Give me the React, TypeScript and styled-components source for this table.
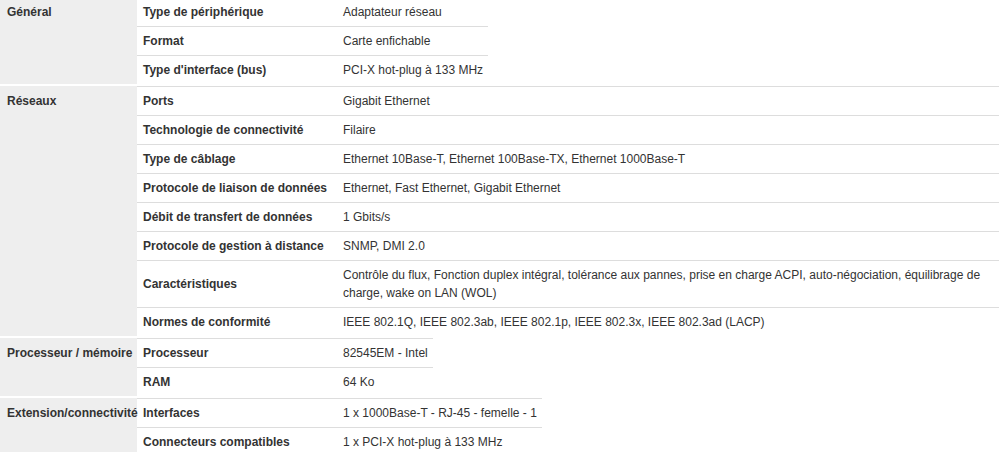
import React from "react";
import styled, { createGlobalStyle } from "styled-components";

const Global = createGlobalStyle`
  html, body { margin: 0; padding: 0; background: #fff; }
  body { font-family: "Liberation Sans", Arial, sans-serif; font-size: 12px; color: #333; }
`;

const Sheet = styled.div`
  width: 999px;
  margin-top: -3px;
  display: flex;
  flex-direction: column;
  align-items: flex-start;
  gap: 2px;
`;

const Group = styled.section`
  display: grid;
  grid-template-columns: 137px 200px auto;
  width: fit-content;
  max-width: 999px;
`;

const Category = styled.div<{ $rows: number }>`
  grid-column: 1;
  grid-row: 1 / span ${(p) => p.$rows};
  background: #eeeeee;
  font-weight: bold;
  line-height: 18px;
  padding: 6px 4px 0 7px;
  white-space: nowrap;
`;

const Label = styled.div`
  grid-column: 2;
  border-top: 1px solid #dddddd;
  font-weight: bold;
  line-height: 18px;
  padding: 5px 6px;
  display: flex;
  align-items: center;
`;

const Value = styled.div`
  grid-column: 3;
  border-top: 1px solid #dddddd;
  line-height: 18px;
  padding: 5px 5px 5px 6px;
  display: flex;
  align-items: center;
`;

type Spec = { category: string; rows: [string, string][] };

const data: Spec[] = [
  {
    category: "Général",
    rows: [
      ["Type de périphérique", "Adaptateur réseau"],
      ["Format", "Carte enfichable"],
      ["Type d'interface (bus)", "PCI-X hot-plug à 133 MHz"],
    ],
  },
  {
    category: "Réseaux",
    rows: [
      ["Ports", "Gigabit Ethernet"],
      ["Technologie de connectivité", "Filaire"],
      ["Type de câblage", "Ethernet 10Base-T, Ethernet 100Base-TX, Ethernet 1000Base-T"],
      ["Protocole de liaison de données", "Ethernet, Fast Ethernet, Gigabit Ethernet"],
      ["Débit de transfert de données", "1 Gbits/s"],
      ["Protocole de gestion à distance", "SNMP, DMI 2.0"],
      [
        "Caractéristiques",
        "Contrôle du flux, Fonction duplex intégral, tolérance aux pannes, prise en charge ACPI, auto-négociation, équilibrage de charge, wake on LAN (WOL)",
      ],
      ["Normes de conformité", "IEEE 802.1Q, IEEE 802.3ab, IEEE 802.1p, IEEE 802.3x, IEEE 802.3ad (LACP)"],
    ],
  },
  {
    category: "Processeur / mémoire",
    rows: [
      ["Processeur", "82545EM - Intel"],
      ["RAM", "64 Ko"],
    ],
  },
  {
    category: "Extension/connectivité",
    rows: [
      ["Interfaces", "1 x 1000Base-T - RJ-45 - femelle - 1"],
      ["Connecteurs compatibles", "1 x PCI-X hot-plug à 133 MHz"],
    ],
  },
];

export default function App() {
  return (
    <>
      <Global />
      <Sheet>
        {data.map((g) => (
          <Group key={g.category}>
            <Category $rows={g.rows.length}>{g.category}</Category>
            {g.rows.map(([l, v]) => (
              <React.Fragment key={l}>
                <Label>{l}</Label>
                <Value>{v}</Value>
              </React.Fragment>
            ))}
          </Group>
        ))}
      </Sheet>
    </>
  );
}
